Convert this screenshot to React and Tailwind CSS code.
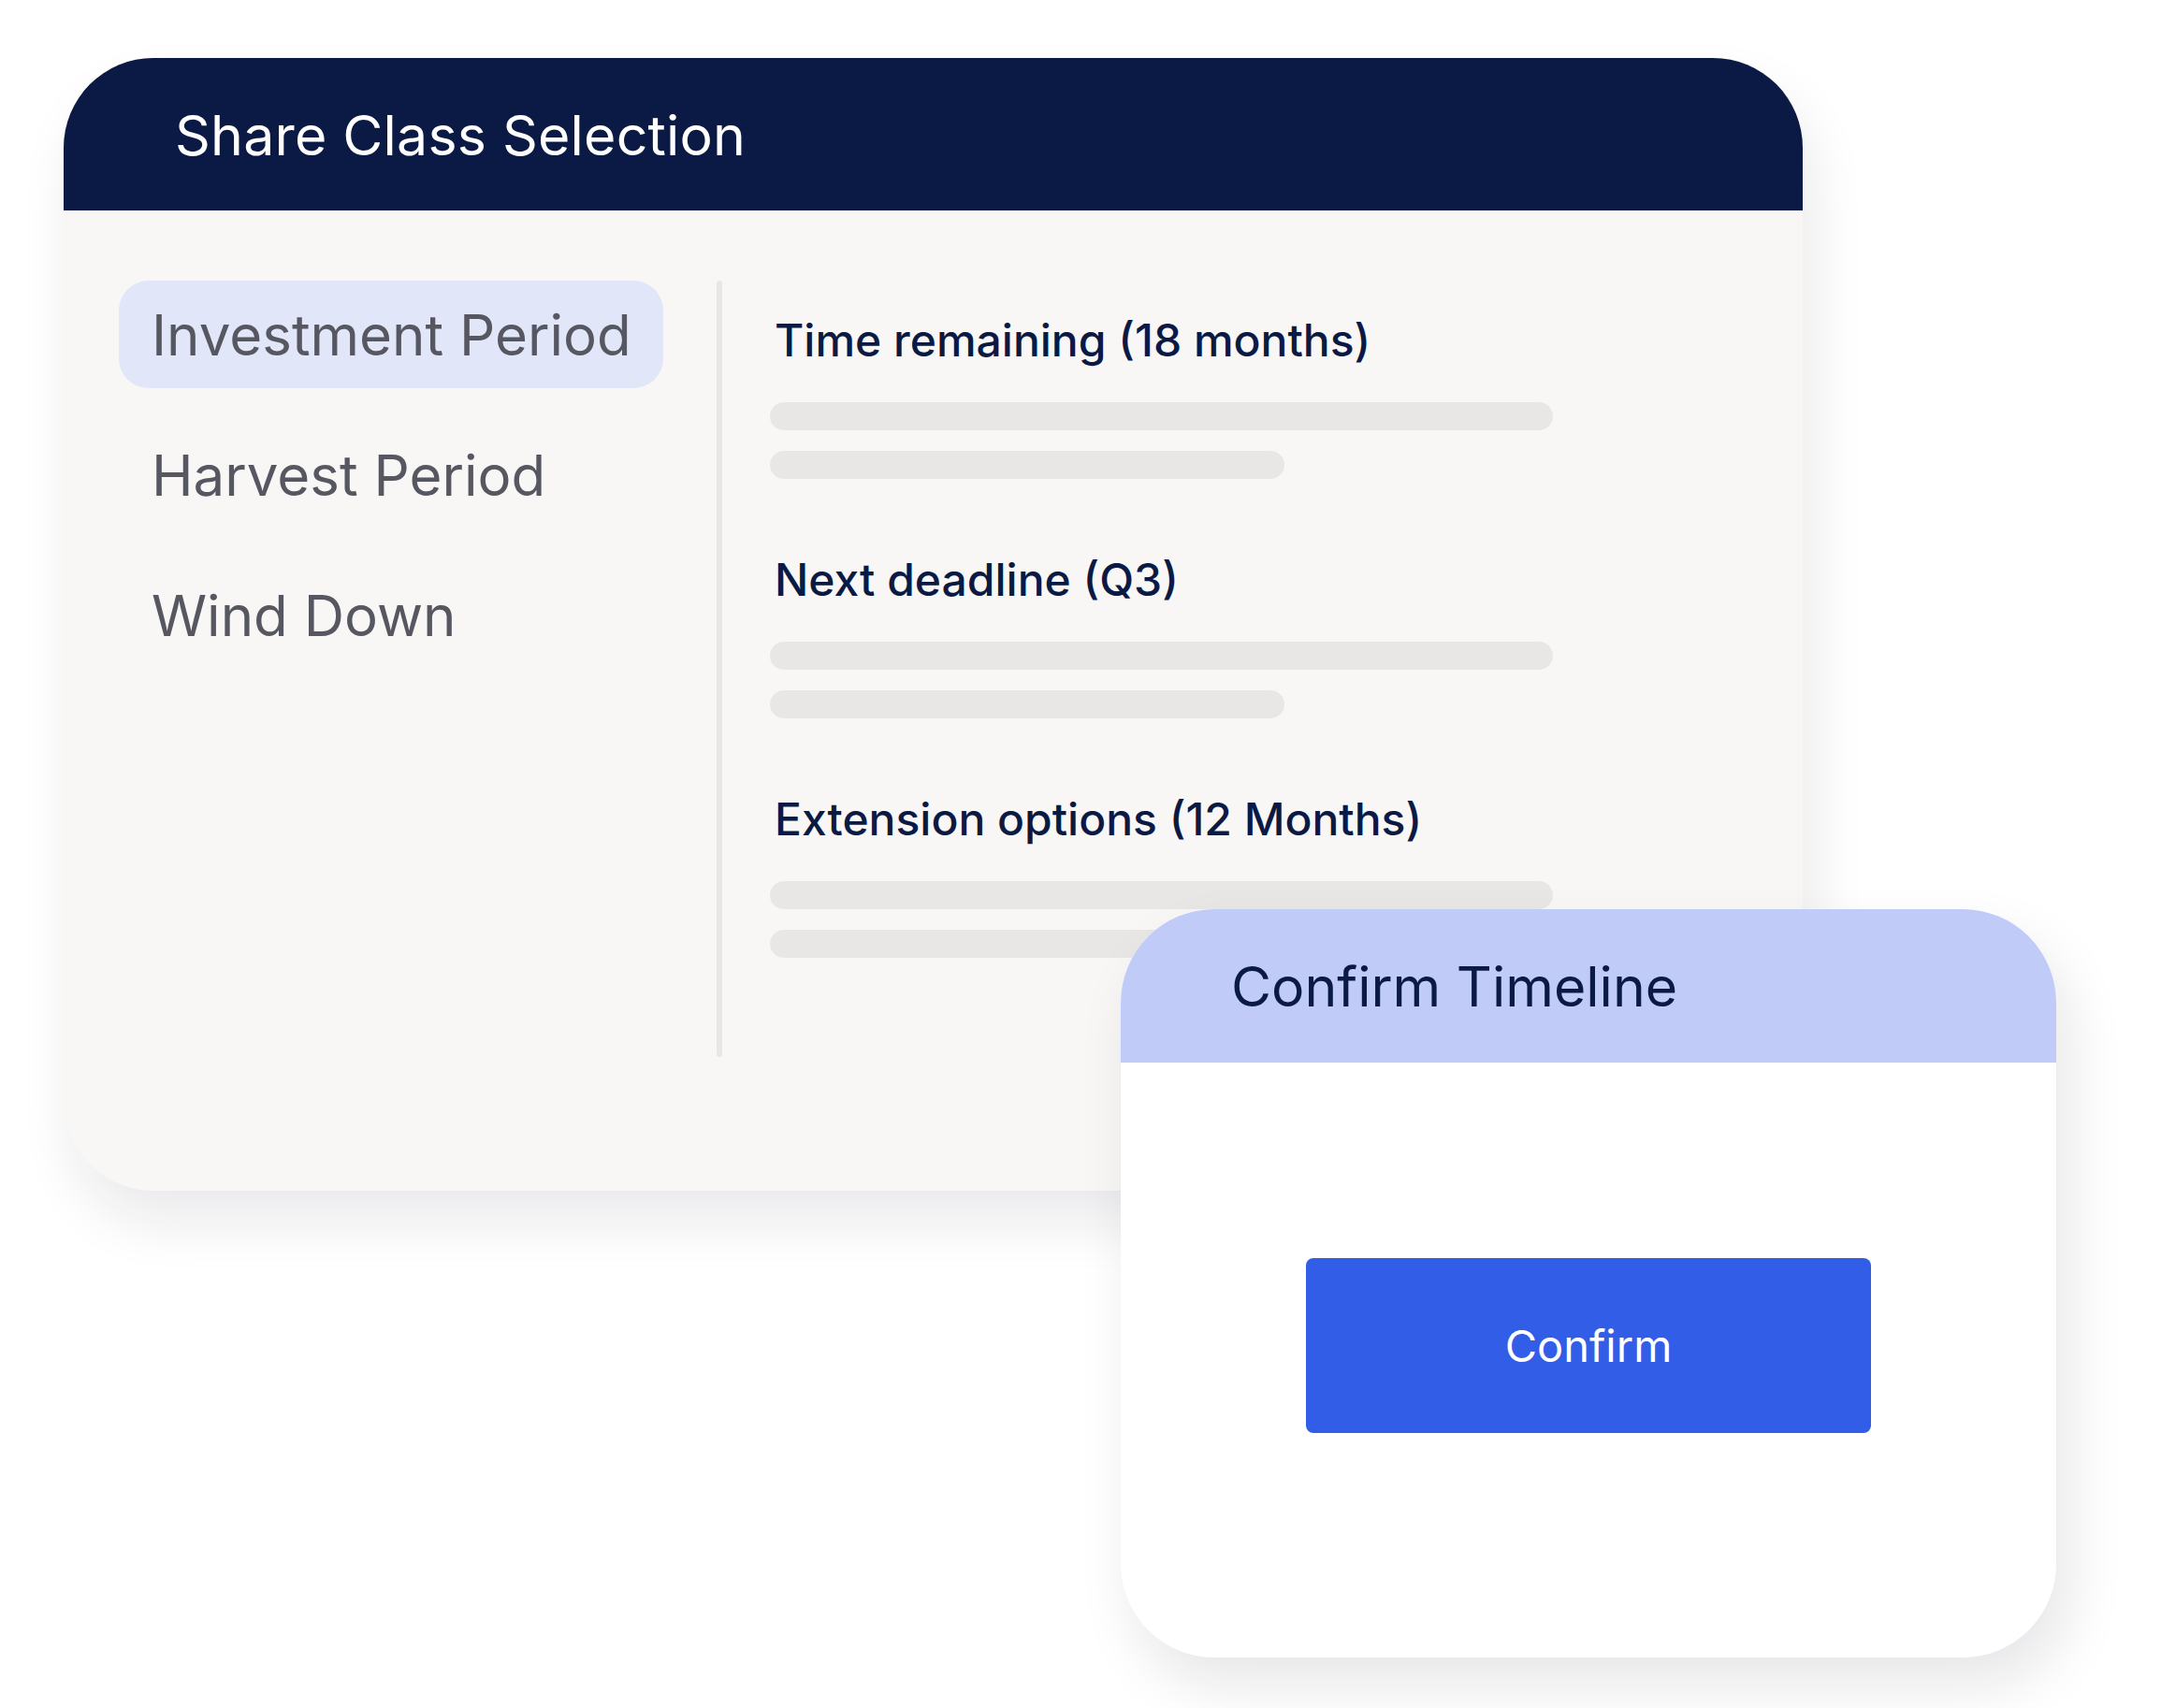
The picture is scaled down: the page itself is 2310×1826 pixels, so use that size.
import React from 'react';

const navItems = ['Investment Period', 'Harvest Period', 'Wind Down'];

const groups = [
  'Time remaining (18 months)',
  'Next deadline (Q3)',
  'Extension options (12 Months)',
];

export default function App() {
  return (
    <div className="relative w-[2310px] h-[1826px] bg-white overflow-hidden" style={{ fontFamily: 'Inter, "Noto Sans", sans-serif' }}>
      {/* Main card */}
      <div className="ml-[68px] mt-[62px] w-[1859px] h-[1211px] rounded-t-[96px] rounded-bl-[96px] bg-[#f8f7f6] shadow-[10px_34px_60px_rgba(20,20,40,0.09)] overflow-hidden">
        <div className="h-[163px] bg-[#0a1a44] flex items-center pl-[119px] pt-[4px]">
          <h1 className="text-[59px] font-normal text-white tracking-[0.2px]">Share Class Selection</h1>
        </div>

        <div className="flex pt-[75px] pl-[59px]">
          {/* Nav */}
          <div className="w-[582px] flex flex-col gap-[35px]">
            {navItems.map((item, i) => (
              <div key={item} className={`h-[115px] rounded-[32px] flex items-center pl-[35px] ${i === 0 ? 'bg-[#e1e6f8]' : ''}`}>
                <span className="text-[60px] leading-none text-[#565760]">{item}</span>
              </div>
            ))}
          </div>

          <div className="ml-[57px] w-[6px] h-[830px] rounded-full bg-[#e8e7e5]" />

          {/* Content */}
          <div className="ml-[51px] pt-[36px] w-[837px]">
            {groups.map(g => (
              <div key={g} className="h-[256px]">
                <div className="h-[56px] leading-[56px] pl-[5px] text-[48px] font-medium text-[#0a1a44] whitespace-nowrap">{g}</div>
                <div className="mt-[38px] h-[30px] w-[837px] rounded-full bg-[#e8e7e5]" />
                <div className="mt-[22px] h-[30px] w-[550px] rounded-full bg-[#e8e7e5]" />
              </div>
            ))}
          </div>
        </div>
      </div>

      {/* Confirm card (overlay) */}
      <div className="absolute left-[1198px] top-[972px] w-[1000px] h-[800px] rounded-[100px] bg-white shadow-[14px_30px_60px_rgba(20,20,40,0.10)] overflow-hidden">
        <div className="h-[164px] bg-[#c0ccf7] flex items-center pl-[118px] pt-[2px]">
          <h2 className="text-[59px] font-normal text-[#0a1a44]">Confirm Timeline</h2>
        </div>
        <div className="pt-[209px] flex justify-center">
          <button className="w-[604px] h-[187px] rounded-[8px] bg-[#325de7] text-white text-[47px] font-normal pt-[2px]">Confirm</button>
        </div>
      </div>
    </div>
  );
}
